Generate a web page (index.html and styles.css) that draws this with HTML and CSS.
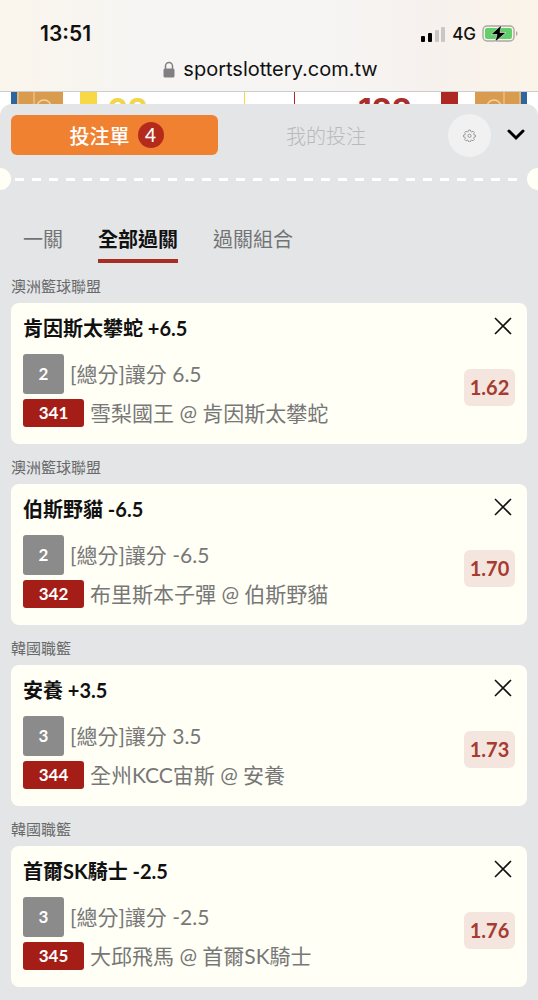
FILE: index.html
```html
<!DOCTYPE html>
<html lang="zh-Hant">
<head>
<meta charset="utf-8">
<meta name="viewport" content="width=device-width, initial-scale=1">
<title>投注單</title>
<link rel="stylesheet" href="styles.css">
</head>
<body>
<header class="browser">
  <div class="status">
    <time class="clock">13:51</time>
    <div class="signals">
      <svg class="bars" viewBox="0 0 25 16" aria-hidden="true"><rect x="0" y="10" width="4" height="6" rx="1"/><rect x="7" y="7" width="4" height="9" rx="1"/><g fill="#c9c7c5"><rect x="14" y="4" width="4" height="12" rx="1"/><rect x="20" y="1" width="4" height="15" rx="1"/></g></svg>
      <span>4G</span>
      <svg class="battery" viewBox="0 0 36 18" aria-hidden="true"><rect x="1" y="1" width="31" height="15" rx="4" fill="none" stroke="#a9a9a5" stroke-width="1.4"/><rect x="3" y="3" width="27" height="11" rx="2" fill="#63cf6c"/><path d="M34 6v5c2-1 2-4 0-5z" fill="#a9a9a5"/><path d="M19.500 0 9 9.500h6L13 17 24 7.500h-6z" stroke="#f7f4ef" stroke-width=".6"/></svg>
    </div>
  </div>
  <div class="address">
    <svg class="lock" viewBox="0 0 12 17" aria-hidden="true"><path d="M2.500 8V5a3.500 3.500 0 0 1 7 0v3" fill="none" stroke="#808083" stroke-width="1.500"/><rect x=".5" y="7.500" width="11" height="9" rx="1.500" fill="#808083"/></svg>
    <span>sportslottery.com.tw</span>
  </div>
</header>
<div class="backdrop" aria-hidden="true">
  <svg class="team" viewBox="0 0 52 24"><path d="M0 0h6v24H0z" fill="#2d659f"/><path d="M6 0h46v24H6z" fill="#d99b4d"/><path d="M7 0v24M23 0v24" stroke="#efd3a5"/><circle cx="33" cy="15" r="7" fill="none" stroke="#efd3a5" stroke-width="1.500"/></svg>
  <i class="block yellow"></i>
  <b class="score left">62</b>
  <i class="rule yellow"></i>
  <i class="rule red"></i>
  <b class="score right">122</b>
  <i class="block red"></i>
  <svg class="team flip" viewBox="0 0 52 24"><path d="M0 0h6v24H0z" fill="#2d659f"/><path d="M6 0h46v24H6z" fill="#d99b4d"/><path d="M7 0v24M23 0v24" stroke="#efd3a5"/><circle cx="33" cy="15" r="7" fill="none" stroke="#efd3a5" stroke-width="1.500"/></svg>
</div>
<main class="sheet">
  <div class="top">
    <button class="slip" type="button">投注單<span class="count">4</span></button>
    <button class="mine" type="button">我的投注</button>
    <button class="gear" type="button" aria-label="設定"><svg viewBox="0 0 24 24"><path d="M10.300 2h3.400l.7 2.700 1.700.7 2.400-1.400 2.400 2.400-1.400 2.400.7 1.700 2.700.7v3.400l-2.700.7-.7 1.700 1.400 2.400-2.400 2.400-2.400-1.400-1.700.7-.7 2.700h-3.400l-.7-2.700-1.700-.7-2.400 1.400-2.400-2.400 1.400-2.400-.7-1.700L1 14.600v-3.400l2.800-.7.7-1.700-1.400-2.400L5.500 4l2.400 1.400 1.700-.7z"/><circle cx="12" cy="12.500" r="3"/></svg></button>
    <button class="fold" type="button" aria-label="收合"><svg viewBox="0 0 18 12"><path d="m2 2 7 7 7-7"/></svg></button>
  </div>
  <div class="tear"></div>
  <nav class="tabs">
    <a href="#single">一關</a>
    <a href="#all" class="active" aria-current="page">全部過關</a>
    <a href="#combo">過關組合</a>
  </nav>
  <section class="bet">
    <h2>澳洲籃球聯盟</h2>
    <article class="card">
      <div class="info"><h3>肯因斯太攀蛇 +6.5</h3>
        <p class="line"><span class="num">2</span>[總分]讓分 6.5</p>
        <p class="line"><span class="code">341</span>雪梨國王 @ 肯因斯太攀蛇</p></div>
      <div class="side"><button class="close" type="button" aria-label="移除"><svg viewBox="0 0 18 18"><path d="m1 1 16 16M17 1 1 17"/></svg></button><span class="odds">1.62</span></div>
    </article>
  </section>
  <section class="bet">
    <h2>澳洲籃球聯盟</h2>
    <article class="card">
      <div class="info"><h3>伯斯野貓 -6.5</h3>
        <p class="line"><span class="num">2</span>[總分]讓分 -6.5</p>
        <p class="line"><span class="code">342</span>布里斯本子彈 @ 伯斯野貓</p></div>
      <div class="side"><button class="close" type="button" aria-label="移除"><svg viewBox="0 0 18 18"><path d="m1 1 16 16M17 1 1 17"/></svg></button><span class="odds">1.70</span></div>
    </article>
  </section>
  <section class="bet">
    <h2>韓國職籃</h2>
    <article class="card">
      <div class="info"><h3>安養 +3.5</h3>
        <p class="line"><span class="num">3</span>[總分]讓分 3.5</p>
        <p class="line"><span class="code">344</span>全州KCC宙斯 @ 安養</p></div>
      <div class="side"><button class="close" type="button" aria-label="移除"><svg viewBox="0 0 18 18"><path d="m1 1 16 16M17 1 1 17"/></svg></button><span class="odds">1.73</span></div>
    </article>
  </section>
  <section class="bet">
    <h2>韓國職籃</h2>
    <article class="card">
      <div class="info"><h3>首爾SK騎士 -2.5</h3>
        <p class="line"><span class="num">3</span>[總分]讓分 -2.5</p>
        <p class="line"><span class="code">345</span>大邱飛馬 @ 首爾SK騎士</p></div>
      <div class="side"><button class="close" type="button" aria-label="移除"><svg viewBox="0 0 18 18"><path d="m1 1 16 16M17 1 1 17"/></svg></button><span class="odds">1.76</span></div>
    </article>
  </section>
</main>
</body>
</html>
```
FILE: styles.css
```css
* { box-sizing: border-box; }
body { margin: 0; background: #fff; font-family: Lato, "Noto Sans CJK TC", sans-serif; color: #111; overflow-x: hidden; }
h2, h3, p { margin: 0; }
button { border: 0; padding: 0; background: none; font: inherit; color: inherit; }
svg { display: block; flex: none; }

.browser { font-family: Inter, "Liberation Sans", sans-serif; color: #111; border-bottom: 1px solid #ccc; padding-top: 20px; background: linear-gradient(90deg, #faf5ec, #f6f5f4 30%, #f6f5f4 60%, #f7f1ee 80%, #fbf4e9); }
.status { display: flex; justify-content: space-between; align-items: center; height: 27px; padding: 0 20px 0 40px; }
.clock { font-size: 21px; font-weight: 600; }
.signals { display: flex; align-items: center; gap: 6px; font-size: 17px; font-weight: 500; }
.bars { width: 25px; height: 16px; }
.battery { width: 36px; height: 18px; }
.address { display: flex; justify-content: center; align-items: center; gap: 8px; height: 44px; padding-left: 3px; font-size: 20px; }
.lock { width: 12px; height: 17px; }

.backdrop { display: flex; height: 24px; padding: 0 11px; overflow: hidden; }
.team { width: 52px; height: 24px; }
.flip { transform: scaleX(-1); margin-left: 17px; }
.block { width: 17px; flex: none; }
.block.yellow { margin-left: 17px; }
.yellow { background: #f6d945; }
.red { background: #ad2822; }
.rule { width: 1px; flex: none; }
.rule.red { margin-left: 49px; }
.score { font-family: Inter, sans-serif; font-size: 32px; line-height: 37px; }
.score.left { flex: 137; color: #f1d54c; padding-left: 10px; }
.score.right { flex: 117; color: #a92e29; text-align: right; padding-right: 29px; }

.sheet { position: relative; min-height: calc(100vh - 104px); margin-top: -12px; padding: 11px 11px 12px; overflow: hidden; background: #e4e5e7; border-radius: 12px 12px 0 0; }
.top { display: flex; align-items: center; height: 40px; font-size: 20px; }
.slip { flex: 203; height: 40px; display: flex; justify-content: center; align-items: center; gap: 8px; padding-left: 4px; border-radius: 6px; background: #ef8130; color: #fff; font-weight: 500; }
.count { width: 26px; height: 26px; border-radius: 50%; background: #b42b1c; line-height: 26px; font-size: 19px; }
.mine { flex: 216; color: #b9babb; font-weight: 300; }
.gear { width: 43px; height: 43px; border-radius: 50%; background: #f1f1f1; display: grid; place-items: center; margin: 0 16px 0 14px; flex: none; }
.gear svg { width: 13px; height: 13px; fill: none; stroke: #88898b; stroke-width: 1.5; }
.fold { flex: none; margin-right: 2px; }
.fold svg { width: 18px; height: 12px; fill: none; stroke: #000; stroke-width: 3; stroke-linecap: round; }

.tear { display: flex; justify-content: space-between; align-items: center; margin: 13px -22px 0; height: 22px; background: repeating-linear-gradient(90deg, #fff 0 9px, transparent 9px 17px) 26px 10px / calc(100% - 50px) 3px no-repeat; }
.tear::before, .tear::after { content: ""; flex: none; width: 22px; height: 22px; border-radius: 50%; background: #fffff6; }

.tabs { display: flex; gap: 35px; padding: 34px 12px 0; font-size: 20px; line-height: 30px; }
.tabs a { color: #727374; text-decoration: none; padding-bottom: 5px; border-bottom: 4px solid transparent; }
.tabs .active { color: #111; font-weight: 700; border-color: #a82d23; }

.bet h2 { height: 40px; padding-top: 12px; font-size: 15px; line-height: 22px; font-weight: 400; color: #68696b; }
.card { display: flex; justify-content: space-between; padding: 11px 12px 12px; border-radius: 8px; background: #fffff6; }
.card h3 { font-size: 20px; line-height: 29px; margin-bottom: 11px; }
.line { display: flex; align-items: center; gap: 6px; font-size: 21px; line-height: 28px; color: #777; margin-bottom: 5px; white-space: nowrap; }
.num, .code { display: grid; place-items: center; border-radius: 3px; color: #fff; font-size: 17px; font-weight: 700; }
.num { width: 41px; height: 40px; background: #8b8b8b; }
.code { width: 61px; height: 28px; background: #a41d16; }
.side { display: flex; flex-direction: column; align-items: flex-end; gap: 34px; padding-top: 3px; }
.close { margin-right: 3px; }
.close svg { width: 18px; height: 18px; fill: none; stroke: #111; stroke-width: 1.6; }
.odds { width: 51px; height: 37px; border-radius: 6px; background: #f4e6df; color: #a63b30; font-size: 20px; line-height: 37px; font-weight: 700; text-align: center; }
```
